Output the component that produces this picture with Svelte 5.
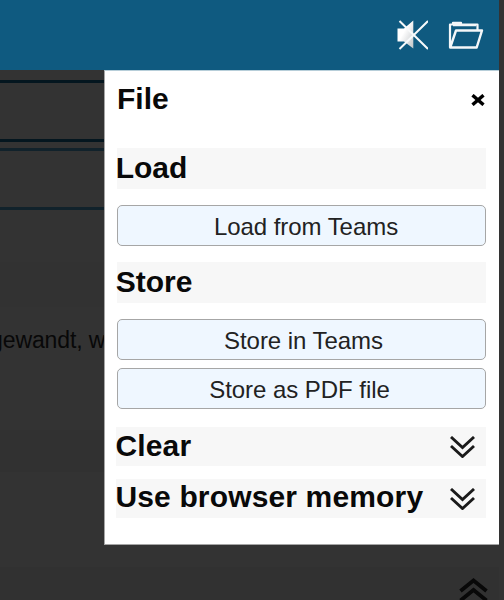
<script>
  const down = ['M1 1 L12.5 11.5 L24 1', 'M1 10 L12.5 20.5 L24 10'];
  const up = ['M1.5 13 L14.5 2.5 L27.5 13', 'M1.5 22.5 L14.5 12 L27.5 22.5'];
</script>

<div class="screen">
  <header>
    <svg class="sound" width="32" height="30" viewBox="0 0 32 30">
      <defs>
        <linearGradient id="horn" x1="0" y1="0" x2="1" y2="1">
          <stop offset="0.4" stop-color="#fff" />
          <stop offset="1" stop-color="#bfc3c6" />
        </linearGradient>
      </defs>
      <path d="M1.5 8.5H8L17.3 .5V28.5L8 21.5H1.5Z" fill="url(#horn)" />
      <path d="M3.5 1L32 29M32 1L3.5 29" stroke="#f7f9fa" stroke-width="2" />
    </svg>
    <svg class="folder" width="36" height="29" viewBox="0 0 36 29" fill="none" stroke="#f4f7f9" stroke-width="2.4" stroke-linejoin="round">
      <path d="M2 26.5V3.5H5V1.8H13V3.5H29.5V9.5M5 4.2H28" stroke-width="2.2" />
      <path d="M2.2 26.5L8 9.5H34L28.7 26.5Z" />
    </svg>
  </header>

  <main>
    <div class="field first"></div>
    <div class="field second"></div>
    <div class="stripe top"></div>
    <p>gewandt, w</p>
    <div class="stripe"></div>
    <div class="foot">
      <svg width="29" height="24" viewBox="0 0 29 24" fill="none" stroke="#080808" stroke-width="3.8">
        {#each up as d}<path {d} />{/each}
      </svg>
    </div>
  </main>

  <aside>
    <div class="title"><h1>File</h1><button class="close" aria-label="Close">
      <svg width="14" height="12" viewBox="0 0 14 12"><path d="M1.5 1.2L12.5 10.8M12.5 1.2L1.5 10.8" stroke="#000" stroke-width="3.4" /></svg>
    </button></div>
    <h2>Load</h2>
    <button class="action load">Load from Teams</button>
    <h2 class="store">Store</h2>
    <button class="action teams">Store in Teams</button>
    <button class="action pdf">Store as PDF file</button>
    {#each ['Clear', 'Use browser memory'] as label}
      <div class="fold">
        <span>{label}</span>
        <svg width="25" height="22" viewBox="0 0 25 22" fill="none" stroke="#1a1a1a" stroke-width="2.9">
          {#each down as d}<path {d} />{/each}
        </svg>
      </div>
    {/each}
  </aside>
</div>

<style>
  .screen {
    position: relative;
    width: 504px;
    height: 600px;
    overflow: hidden;
    background: #333;
    font-family: "Liberation Sans", Arial, sans-serif;
    color: #090909;
  }
  header {
    box-sizing: border-box;
    width: 499px;
    height: 70px;
    padding: 20px 15px 0 0;
    display: flex;
    justify-content: flex-end;
    background: #0f5a80;
  }
  .sound { margin-right: 20px; }
  .folder { margin-top: 1px; }
  main { height: 530px; width: 499px; overflow: hidden; }
  .field { box-sizing: border-box; }
  .first { height: 62px; margin-top: 10px; border: solid #04161f; border-width: 3px 0; }
  .second { height: 62px; margin-top: 6px; border: solid #11222b; border-width: 3px 0; }
  p {
    margin: 18px 0 0 -10px;
    font-size: 23px;
    line-height: 30px;
    color: #080808;
    white-space: nowrap;
    letter-spacing: -.1px;
  }
  .stripe { height: 42px; margin-top: 75px; background: #313131; }
  .stripe.top { height: 45px; margin-top: 52px; background: #323232; }
  .foot {
    box-sizing: border-box;
    height: 53px;
    margin-top: 95px;
    padding: 11px 11px 0 0;
    display: flex;
    justify-content: flex-end;
    background: #313131;
  }
  aside {
    position: absolute;
    left: 104px;
    top: 70px;
    box-sizing: border-box;
    width: 395px;
    height: 475px;
    padding: 0 13px 0 12px;
    border: solid #a5a5a5;
    border-width: 0 0 1px 1px;
    border-top: 1px solid #b7ced9;
    background: #fff;
  }
  .title { height: 77px; padding-right: 1px; display: flex; justify-content: space-between; }
  h1, h2 { margin: 0; font-weight: 700; font-size: 30px; }
  h1 { line-height: 56px; }
  .close { width: 14px; height: 12px; margin-top: 23px; padding: 0; border: 0; background: none; }
  .close svg { display: block; }
  h2 { height: 41px; line-height: 39px; background: #f7f7f7; text-indent: -1.3px; }
  .store { margin-top: 16px; }
  .action {
    display: block;
    box-sizing: border-box;
    width: 369px;
    height: 41px;
    margin: 16px 0 0;
    border: 1px solid #a6a6a6;
    border-radius: 5px;
    background: #eff7ff;
    font: 24px "Liberation Sans", Arial, sans-serif;
    color: #222;
  }
  .load { padding: 2px 0 0 9px; letter-spacing: -.05px; }
  .teams { padding: 2px 0 0 4px; letter-spacing: -.05px; }
  .pdf { margin-top: 8px; padding: 2px 4px 0 0; letter-spacing: -.05px; }
  .fold {
    box-sizing: border-box;
    height: 39px;
    margin: 18px 0 0 -1px;
    padding-right: 11px;
    display: flex;
    justify-content: space-between;
    background: #f7f7f7;
    font-size: 30px;
    font-weight: 700;
    line-height: 37px;
    white-space: nowrap;
    letter-spacing: .15px;
  }
  .fold + .fold { margin-top: 13px; line-height: 35px; }
  .fold span { margin-left: -.6px; }
  .fold svg { margin-top: 9px; }
</style>
